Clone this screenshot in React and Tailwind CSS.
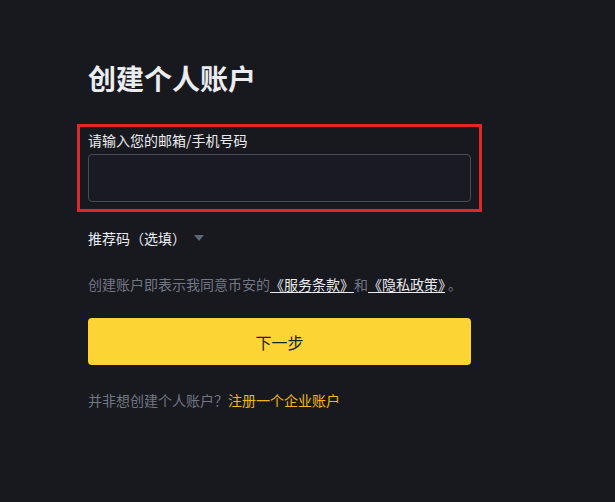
export default function App() {
  return (
    <div
      className="w-[615px] h-[502px] bg-[#18181f] overflow-hidden"
      style={{ fontFamily: '"Noto Sans CJK SC", "Noto Sans", sans-serif' }}
    >
      <div className="pl-[88px] pt-[60px]">
        <h1 className="text-[28px] leading-[36px] font-bold text-[#eaecef]">创建个人账户</h1>

        {/* highlighted field */}
        <div className="-ml-[11px] mt-[28px] w-[405px] border-[3px] border-[#e3262a] px-[8px] pt-[3px] pb-[7px]">
          <label className="block text-[14px] leading-[20px] text-[#eaecef]">请输入您的邮箱/手机号码</label>
          <input
            type="text"
            className="mt-1 block w-[383px] h-[48px] rounded-[4px] border border-[#474d57] bg-[#1a1a22] px-3 text-[14px] text-[#eaecef] outline-none"
          />
        </div>

        <div className="mt-4 flex items-center gap-[7px] text-[14px] leading-[20px] text-[#eaecef]">
          <span>推荐码（选填）</span>
          <svg width="12" height="8" viewBox="0 0 12 8">
            <path d="M1 1h10L6 7z" fill="#5e6673" />
          </svg>
        </div>

        <p className="mt-[26px] text-[14px] leading-[20px] text-[#727783]">
          创建账户即表示我同意币安的
          <a className="text-[#eaecef] underline underline-offset-2">《服务条款》</a>
          和
          <a className="text-[#eaecef] underline underline-offset-2">《隐私政策》</a>
          <span className="ml-[3px]">。</span>
        </p>

        <button className="mt-6 w-[383px] h-[47px] rounded-[4px] bg-[#fcd535] text-[16px] text-[#1e2026]">
          下一步
        </button>

        <p className="mt-[25px] text-[14px] leading-[20px] text-[#727783]">
          并非想创建个人账户？<a className="text-[#f0b90b]">注册一个企业账户</a>
        </p>
      </div>
    </div>
  )
}
